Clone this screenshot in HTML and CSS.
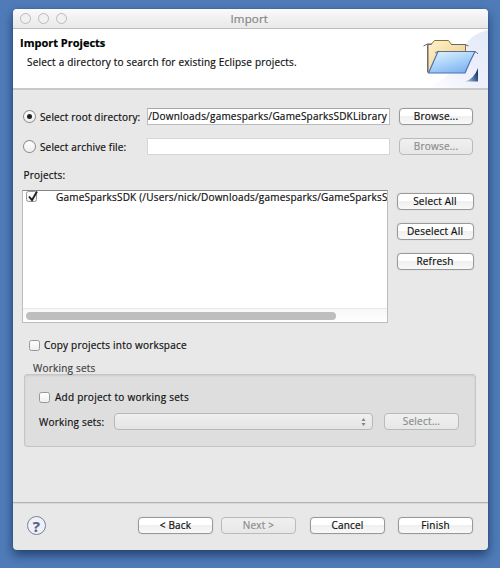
FILE: index.html
```
<!DOCTYPE html>
<html lang="en">
<head>
<meta charset="utf-8">
<title>Import</title>
<link rel="stylesheet" href="styles.css">
</head>
<body>
<main class="window">
  <div class="titlebar">
    <div class="lights"><i></i><i></i><i></i></div>
    <span class="title">Import</span>
  </div>
  <header class="banner">
    <div class="intro">
      <h1>Import Projects</h1>
      <p>Select a directory to search for existing Eclipse projects.</p>
    </div>
    <svg class="art" width="75" height="59" viewBox="0 0 75 59">
      <defs>
        <linearGradient id="glow" x1="1" y1="0" x2="0" y2="1"><stop offset="0" stop-color="#e4e9f8"/><stop offset=".55" stop-color="#eef1fb"/><stop offset="1" stop-color="#fff"/></linearGradient>
        <linearGradient id="blue" x1="0" y1="0" x2=".6" y2="1"><stop offset="0" stop-color="#e4f4ff"/><stop offset=".5" stop-color="#b2d7fa"/><stop offset="1" stop-color="#82b5f2"/></linearGradient>
        <linearGradient id="tan" x1="0" y1="0" x2="1" y2="1"><stop offset="0" stop-color="#fff3cd"/><stop offset="1" stop-color="#ecc97b"/></linearGradient>
        <linearGradient id="corner" x1="0" y1="1" x2="1" y2=".6"><stop offset="0" stop-color="#b9d8ec"/><stop offset="1" stop-color="#1f3f78"/></linearGradient>
      </defs>
      <path d="M75 1Q54 6 49 24Q40 50 12 59H75Z" fill="url(#glow)"/>
      <path d="M14.500 43V15.500H18L21.500 11.500H35.500L38.500 15.500H52.500V26" fill="url(#tan)" stroke="#8d713d"/>
      <path d="M10.500 17L14.500 15H19M38 15.500H52L55.500 17M15 15.500V44" fill="none" stroke="#62657f"/>
      <path d="M15.500 44L25 22.500H62Q57 32 52 44H15Z" fill="url(#blue)" stroke="#4e6faf" stroke-width="1.200"/>
      <path d="M22 24Q25 21.500 28 22.500H60Q64 22.500 65 25" fill="none" stroke="#626d91"/>
      <path d="M52 52.500Q61 50 65 39V52.500Z" fill="url(#corner)"/>
    </svg>
  </header>
  <section class="content">
    <div class="source">
      <span class="radio on"></span><label class="root">Select root directory:</label>
      <div class="field active"><span>/Downloads/gamesparks/GameSparksSDKLibrary</span></div>
      <button>Browse...</button>
    </div>
    <div class="source">
      <span class="radio"></span><label class="archive">Select archive file:</label>
      <div class="field"></div>
      <button disabled>Browse...</button>
    </div>
    <div class="caption">Projects:</div>
    <div class="projects">
      <div class="list">
        <div class="item">
          <span class="check"><svg width="14" height="14" viewBox="0 0 14 14"><path d="M3 6.500L6 10.200L11 1.500" fill="none" stroke="#222" stroke-width="1.900"/></svg></span>
          <span class="path">GameSparksSDK (/Users/nick/Downloads/gamesparks/GameSparksS</span>
        </div>
        <div class="track"><div class="thumb"></div></div>
      </div>
      <div class="actions">
        <button>Select All</button><button>Deselect All</button><button>Refresh</button>
      </div>
    </div>
    <div class="copy"><span class="check"></span><label>Copy projects into workspace</label></div>
    <div class="legend">Working sets</div>
    <div class="group">
      <div class="add"><span class="check"></span><label>Add project to working sets</label></div>
      <div class="sets">
        <label>Working sets:</label>
        <div class="combo"><svg width="5" height="8" viewBox="0 0 5 8"><path d="M2.500 0L4.500 3H.5ZM2.500 8L4.500 5H.5Z" fill="#858585"/></svg></div>
        <button disabled>Select...</button>
      </div>
    </div>
  </section>
  <footer class="footer">
    <span class="help">?</span>
    <button class="back">&lt; Back</button>
    <button class="next" disabled>Next &gt;</button>
    <button class="cancel">Cancel</button>
    <button class="finish">Finish</button>
  </footer>
</main>
</body>
</html>
```
FILE: styles.css
```
* { box-sizing: border-box; }
body {
  margin: 0;
  height: 568px;
  overflow: hidden;
  padding: 9px 12px 0 12.5px;
  background: #4f7cb8;
  font: 500 10px/14px "Open Sans", "Noto Sans", sans-serif;
  letter-spacing: .21px;
  -webkit-text-stroke: .2px;
  color: #111;
  white-space: nowrap;
}
.window {
  display: flex;
  flex-direction: column;
  width: 475px;
  height: 541px;
  background: #e8e8e8;
  border-radius: 4px;
  overflow: hidden;
  box-shadow: 0 0 1px #173766, 0 5px 11px rgba(10, 30, 70, .65);
}
.titlebar {
  display: flex;
  align-items: center;
  height: 20px;
  padding-left: 7px;
  background: linear-gradient(#fafafa, #e8e8e8);
  border-bottom: 1px solid #bcbcbc;
}
.lights { display: flex; gap: 7px; width: 211px; }
.lights i {
  width: 11px;
  height: 11px;
  border: 1px solid #bababa;
  border-radius: 50%;
  background: #f1f1f1;
}
.title { font-size: 11.5px; color: #858585; letter-spacing: .15px; }
.banner {
  display: flex;
  justify-content: space-between;
  height: 61px;
  background: #fff;
  border-bottom: 2px solid #c9c9c9;
}
.intro { padding: 6px 0 0 7.5px; }
h1 { margin: 0; font-size: 11px; line-height: 15px; font-weight: 700; letter-spacing: 0; color: #000; }
p { margin: 5px 0 0 7px; }
.art { display: block; }
.content { flex: 1; padding: 18px 14px 0 9.5px; }
.source { display: flex; align-items: center; height: 17px; margin-bottom: 13px; }
.radio {
  display: flex;
  width: 13px;
  height: 13px;
  margin-left: 1px;
  border: 1px solid #8b8b8b;
  border-radius: 50%;
  background: linear-gradient(#fff, #ededed);
}
.radio.on::after { content: ""; width: 5px; height: 5px; margin: auto; border-radius: 50%; background: #222; }
.source label { width: 107.500px; margin-left: 4px; letter-spacing: .16px; }
.field {
  width: 243px;
  height: 17px;
  margin-right: 9px;
  padding-left: 0;
  overflow: hidden;
  background: #fff;
  border: 1px solid #d6d6d6;
}
.field.active { border-color: #a6a6a6 #bcbcbc #bcbcbc; }
button {
  width: 75px;
  height: 17px;
  padding: 0 0 1px;
  font: inherit;
  letter-spacing: inherit;
  line-height: 14px;
  color: #111;
  border: 1px solid #999;
  border-radius: 4px;
  background: linear-gradient(#fff 0 45%, #f0f0f0 50%, #f8f8f8);
  box-shadow: 0 0 1px #aaa;
}
button:disabled {
  color: #8c8c8c;
  border-color: #bababa;
  background: linear-gradient(#f0f0f0, #e7e7e7);
  box-shadow: none;
}
.caption { margin: 0 0 8px 1.500px; }
.projects { display: flex; gap: 9px; height: 133px; }
.list {
  display: flex;
  flex-direction: column;
  justify-content: space-between;
  width: 366px;
  background: #fff;
  border: 1px solid #bdbdbd;
  border-top-color: #858585;
  overflow: hidden;
}
.item { display: flex; height: 14px; padding-left: 3px; }
.path { margin: -1px 0 0 19px; letter-spacing: .2px; }
.check {
  flex: none;
  width: 11px;
  height: 11px;
  border: 1px solid #989898;
  border-radius: 2.500px;
  background: linear-gradient(#fff, #eee);
}
.check svg { display: block; margin: -2px 0 0 -1px; overflow: visible; }
.track { height: 14px; padding: 3px; border-top: 1px solid #e8e8e8; background: linear-gradient(#f7f7f7, #fff); }
.thumb { width: 310px; height: 8px; border-radius: 4px; background: #bebebe; }
.actions { display: flex; flex-direction: column; gap: 13px; padding-top: 3px; }
.actions button { width: 77px; }
.copy { display: flex; align-items: center; gap: 4px; height: 14px; margin: 15px 0 0 7px; }
.legend { margin: 9px 0 0 11px; color: #444; }
.group {
  width: 452px;
  height: 73px;
  margin: -1px 0 0 2px;
  padding: 14px 0 0 14px;
  border: 1px solid #c5c5c5;
  border-radius: 3px;
  background: #dedede;
  box-shadow: inset 0 1px 2px #ccc;
}
.add { display: flex; align-items: center; gap: 5px; height: 16px; letter-spacing: .25px; }
.sets { display: flex; align-items: center; height: 17px; margin-top: 8px; }
.sets label { width: 75px; }
.combo {
  display: flex;
  align-items: center;
  justify-content: flex-end;
  width: 259px;
  height: 17px;
  margin-right: 11px;
  padding-right: 6px;
  border: 1px solid #b8b8b8;
  border-radius: 4px;
  background: linear-gradient(#f0f0f0, #e4e4e4);
}
.footer {
  display: flex;
  align-items: center;
  height: 48px;
  padding: 0 0 2px 14.500px;
  border-top: 1px solid #b2b2b2;
  box-shadow: inset 0 1px #d8d8d8;
}
.help {
  display: flex;
  align-items: center;
  justify-content: center;
  width: 19px;
  height: 19px;
  border: 1px solid #76819d;
  border-radius: 50%;
  background: #eef1f6;
  color: #56658b;
  font-size: 15px;
  font-weight: 700;
}
.back { margin-left: 92px; }
.next { margin-left: 8px; }
.cancel { margin-left: 14px; }
.finish { margin-left: 13px; }
```
